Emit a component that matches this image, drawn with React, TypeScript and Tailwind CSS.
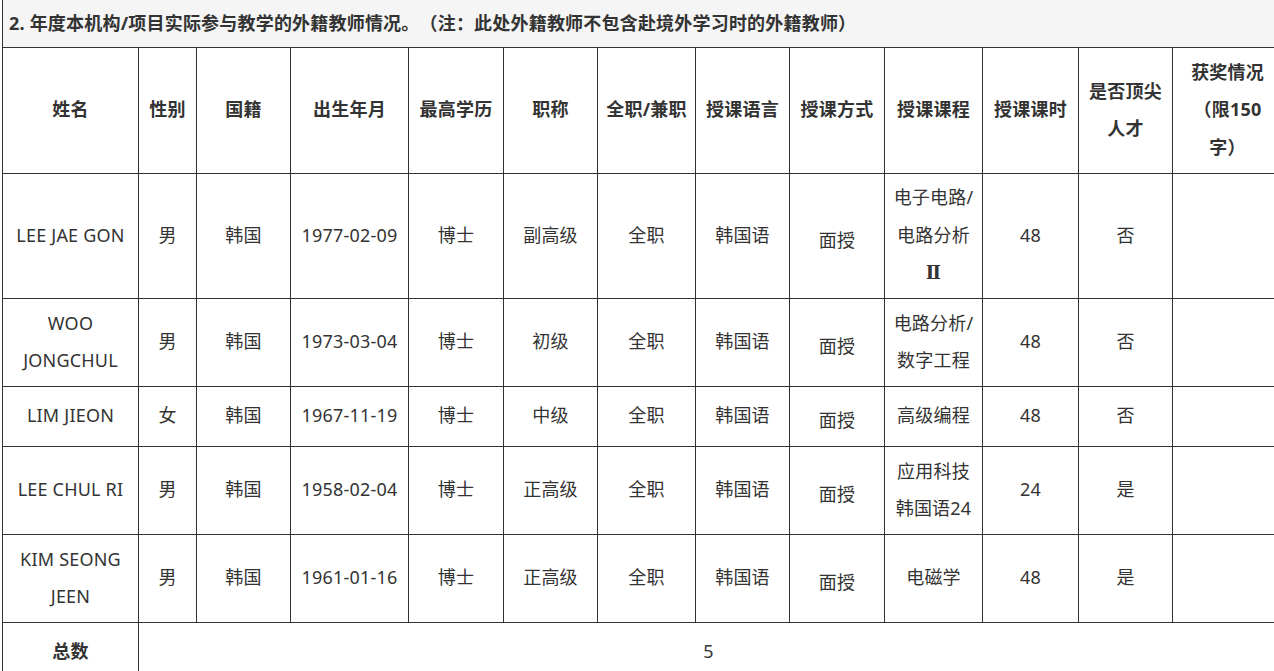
const COL_WIDTHS = [
  'w-[136px]',
  'w-[58px]',
  'w-[94px]',
  'w-[118px]',
  'w-[95px]',
  'w-[94px]',
  'w-[98px]',
  'w-[94px]',
  'w-[95px]',
  'w-[98px]',
  'w-[96px]',
  'w-[94px]',
  'w-[110px]',
];

const HEADERS: string[][] = [
  ['姓名'],
  ['性别'],
  ['国籍'],
  ['出生年月'],
  ['最高学历'],
  ['职称'],
  ['全职/兼职'],
  ['授课语言'],
  ['授课方式'],
  ['授课课程'],
  ['授课课时'],
  ['是否顶尖', '人才'],
  ['获奖情况', '（限150', '字）'],
];

type Teacher = {
  name: string;
  sex: string;
  birth: string;
  rank: string;
  course: string[];
  hours: string;
  top: string;
  height: string;
};

const TEACHERS: Teacher[] = [
  {
    name: 'LEE JAE GON',
    sex: '男',
    birth: '1977-02-09',
    rank: '副高级',
    course: ['电子电路/', '电路分析', 'Ⅱ'],
    hours: '48',
    top: '否',
    height: 'h-[125px]',
  },
  {
    name: 'WOO JONGCHUL',
    sex: '男',
    birth: '1973-03-04',
    rank: '初级',
    course: ['电路分析/', '数字工程'],
    hours: '48',
    top: '否',
    height: 'h-[88px]',
  },
  {
    name: 'LIM JIEON',
    sex: '女',
    birth: '1967-11-19',
    rank: '中级',
    course: ['高级编程'],
    hours: '48',
    top: '否',
    height: 'h-[60px]',
  },
  {
    name: 'LEE CHUL RI',
    sex: '男',
    birth: '1958-02-04',
    rank: '正高级',
    course: ['应用科技', '韩国语24'],
    hours: '24',
    top: '是',
    height: 'h-[88px]',
  },
  {
    name: 'KIM SEONG JEEN',
    sex: '男',
    birth: '1961-01-16',
    rank: '正高级',
    course: ['电磁学'],
    hours: '48',
    top: '是',
    height: 'h-[88px]',
  },
];

const cell = 'border border-[#333] px-2 py-0 text-center align-middle';

function Lines({ lines }: { lines: string[] }) {
  return (
    <>
      {lines.map((l, i) =>
        l === 'Ⅱ' ? (
          // the roman numeral is drawn from a serif face in the source page
          <span
            key={i}
            className="block font-bold"
            style={{ fontFamily: '"DejaVu Serif", "Liberation Serif", serif' }}
          >
            {l}
          </span>
        ) : (
          <span key={i} className="block">
            {l}
          </span>
        ),
      )}
    </>
  );
}

export default function App() {
  return (
    <div
      className="h-[671px] w-[1274px] overflow-hidden bg-white pl-[2px] text-[18px] leading-[37.5px] text-[#333] [text-spacing-trim:space-all]"
      style={{ fontFamily: '"Noto Sans", "Noto Sans CJK SC", sans-serif' }}
    >
      <table className="w-[1280px] table-fixed border-collapse tracking-[0.2px]">
        <colgroup>
          {COL_WIDTHS.map((w, i) => (
            <col key={i} className={w} />
          ))}
        </colgroup>
        <tbody>
          <tr>
            <td
              colSpan={13}
              className="h-[47px] border-x border-b border-[#333] bg-[#f5f5f5] px-[6px] py-0 text-left align-middle font-bold"
            >
              2. 年度本机构/项目实际参与教学的外籍教师情况。（注：此处外籍教师不包含赴境外学习时的外籍教师）
            </td>
          </tr>
          <tr>
            {HEADERS.map((h, i) => (
              <td key={i} className={`${cell} h-[126px] font-bold`}>
                <Lines lines={h} />
              </td>
            ))}
          </tr>
          {TEACHERS.map((t) => (
            <tr key={t.name}>
              <td className={`${cell} ${t.height}`}>{t.name}</td>
              <td className={cell}>{t.sex}</td>
              <td className={cell}>韩国</td>
              <td className={cell}>{t.birth}</td>
              <td className={cell}>博士</td>
              <td className={cell}>{t.rank}</td>
              <td className={cell}>全职</td>
              <td className={cell}>韩国语</td>
              <td className={`${cell} pt-[10px]`}>面授</td>
              <td className={`${cell} px-1`}>
                <Lines lines={t.course} />
              </td>
              <td className={cell}>{t.hours}</td>
              <td className={cell}>{t.top}</td>
              <td className={cell} />
            </tr>
          ))}
          <tr>
            <td className={`${cell} h-[60px] font-bold`}>总数</td>
            <td colSpan={12} className={`${cell} pr-[12px]`}>
              5
            </td>
          </tr>
        </tbody>
      </table>
    </div>
  );
}
